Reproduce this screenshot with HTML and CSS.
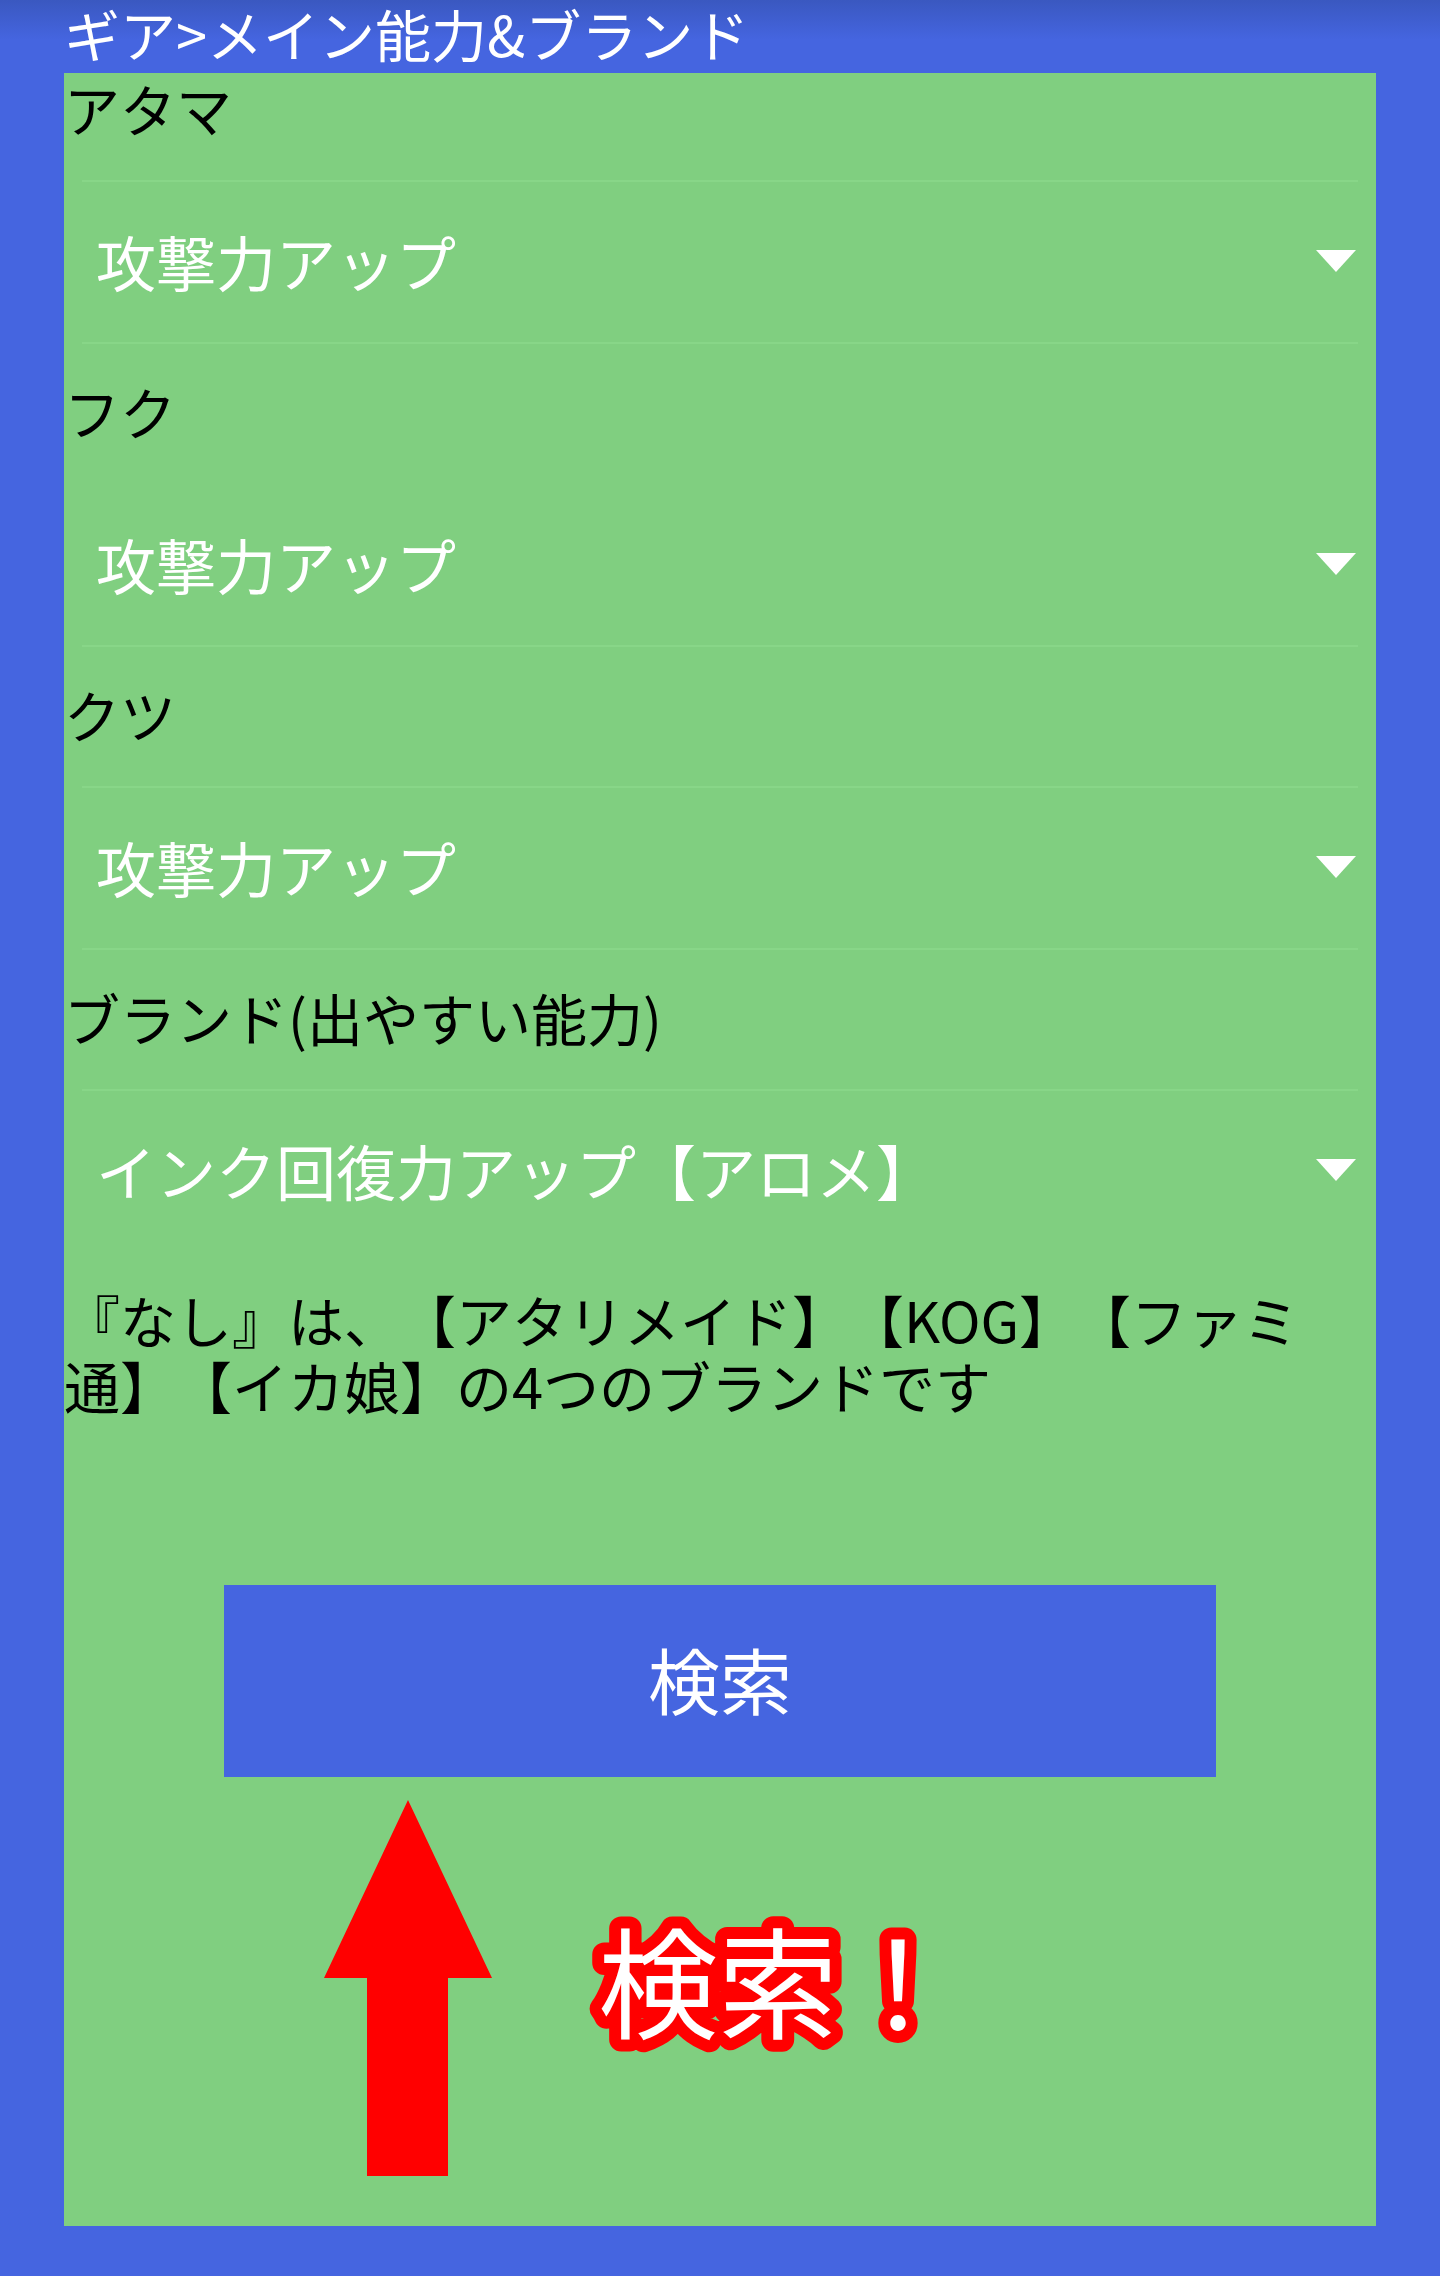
FILE: index.html
```html
<!DOCTYPE html>
<html lang="ja">
<head>
  <meta charset="UTF-8">
  <title>ギア検索</title>
  <link rel="stylesheet" href="styles.css">
</head>
<body>

<header>
  <h1>ギア&gt;メイン能力&amp;ブランド</h1>
</header>

<form class="panel">
  <label class="name" for="head">アタマ</label>
  <div class="field">
    <select id="head"><option>攻撃力アップ</option></select>
  </div>

  <label class="name" for="body">フク</label>
  <div class="field faint-top">
    <select id="body"><option>攻撃力アップ</option></select>
  </div>

  <label class="name" for="shoes">クツ</label>
  <div class="field">
    <select id="shoes"><option>攻撃力アップ</option></select>
  </div>

  <label class="name" for="brand">ブランド(出やすい能力)</label>
  <div class="field faint-bottom">
    <select id="brand"><option>インク回復力アップ【アロメ】</option></select>
  </div>

  <p class="note">『なし』は、【アタリメイド】【KOG】【ファミ通】【イカ娘】の4つのブランドです</p>

  <button class="search" type="button">検索</button>

  <svg class="guide" viewBox="0 0 640 376">
    <path d="M84 0L168 178H124V376H43V178H0Z" fill="#f00"/>
    <text class="callout" x="274" y="230">検索！</text>
  </svg>
</form>

</body>
</html>
```

FILE: styles.css
```css
* { box-sizing: border-box; }
body {
  margin: 0;
  padding: 0 64px;
  min-height: 100vh;
  display: flex;
  flex-direction: column;
  background: #4565e0 linear-gradient(#3a58c0, #4565e0) 0 0 / 100% 40px no-repeat;
  font-family: "Noto Sans CJK JP", sans-serif;
  text-spacing-trim: space-all;
  color: #000;
}
h1 {
  margin: 0;
  height: 73px;
  line-height: 66px;
  font-size: 56px;
  font-weight: 400;
  color: #fff;
}
.panel {
  flex: 1;
  margin-bottom: 50px;
  background: #80cf80;
}
.name {
  display: block;
  height: 107px;
  line-height: 70px;
  font-size: 56px;
}
.field {
  height: 164px;
  margin: 0 18px 32px;
  position: relative;
  border-top: 2px solid #88d688;
  border-bottom: 2px solid #88d688;
}
.faint-top { border-top-color: transparent; }
.faint-bottom { border-bottom-color: transparent; }
.field::after {
  content: "";
  position: absolute;
  right: 2px;
  top: 68px;
  border: 20px solid transparent;
  border-top: 22px solid #fff;
  border-bottom: 0;
  pointer-events: none;
}
select {
  width: 100%;
  height: 100%;
  padding: 0 14px 4px;
  border: 0;
  background: transparent;
  appearance: none;
  font: inherit;
  font-size: 60px;
  color: #fff;
}
option { color: #000; }
.note {
  margin: 0;
  padding-top: 1px;
  font-size: 56px;
  line-height: 66px;
}
.search {
  display: block;
  width: calc(100% - 320px);
  height: 192px;
  margin: 167px auto 23px;
  padding-bottom: 8px;
  border: 0;
  background: #4565e0;
  font: inherit;
  font-size: 72px;
  color: #fff;
}
.guide {
  display: block;
  width: 640px;
  margin-left: 260px;
}
.callout {
  font-size: 120px;
  font-weight: 400;
  fill: #fff;
  stroke: #f00;
  stroke-width: 24px;
  stroke-linejoin: round;
  paint-order: stroke;
}
```
